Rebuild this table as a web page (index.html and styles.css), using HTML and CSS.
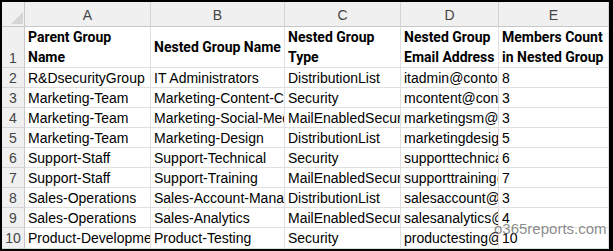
FILE: index.html
```html
<!DOCTYPE html>
<html lang="en">
<head>
<meta charset="utf-8">
<title>Nested Groups Report</title>
<link rel="stylesheet" href="styles.css">
</head>
<body>
<div class="frame">
  <div class="sheet">
    <div class="corner"><svg class="select-all" width="12" height="12" viewBox="0 0 12 12"><polygon points="12,0 12,12 0,12" fill="#d6d6d6"/></svg></div>
    <div class="colhead">A</div>
    <div class="colhead">B</div>
    <div class="colhead">C</div>
    <div class="colhead">D</div>
    <div class="colhead">E</div>

    <div class="rowhead rowhead-bottom">1</div>
    <div class="cell head">Parent Group<br>Name</div>
    <div class="cell head">Nested Group Name</div>
    <div class="cell head">Nested Group<br>Type</div>
    <div class="cell head">Nested Group<br>Email Address</div>
    <div class="cell head">Members Count<br>in Nested Group</div>

    <div class="rowhead">2</div>
    <div class="cell">R&amp;DsecurityGroup</div>
    <div class="cell">IT Administrators</div>
    <div class="cell">DistributionList</div>
    <div class="cell">itadmin@contoso.com</div>
    <div class="cell">8</div>

    <div class="rowhead">3</div>
    <div class="cell">Marketing-Team</div>
    <div class="cell">Marketing-Content-Creators</div>
    <div class="cell">Security</div>
    <div class="cell">mcontent@contoso.com</div>
    <div class="cell">3</div>

    <div class="rowhead">4</div>
    <div class="cell">Marketing-Team</div>
    <div class="cell">Marketing-Social-Media</div>
    <div class="cell">MailEnabledSecurity</div>
    <div class="cell">marketingsm@contoso.com</div>
    <div class="cell">3</div>

    <div class="rowhead">5</div>
    <div class="cell">Marketing-Team</div>
    <div class="cell">Marketing-Design</div>
    <div class="cell">DistributionList</div>
    <div class="cell">marketingdesign@contoso.com</div>
    <div class="cell">5</div>

    <div class="rowhead">6</div>
    <div class="cell">Support-Staff</div>
    <div class="cell">Support-Technical</div>
    <div class="cell">Security</div>
    <div class="cell">supporttechnical@contoso.com</div>
    <div class="cell">6</div>

    <div class="rowhead">7</div>
    <div class="cell">Support-Staff</div>
    <div class="cell">Support-Training</div>
    <div class="cell">MailEnabledSecurity</div>
    <div class="cell">supporttraining@contoso.com</div>
    <div class="cell">7</div>

    <div class="rowhead">8</div>
    <div class="cell">Sales-Operations</div>
    <div class="cell">Sales-Account-Management</div>
    <div class="cell">DistributionList</div>
    <div class="cell">salesaccount@contoso.com</div>
    <div class="cell">3</div>

    <div class="rowhead">9</div>
    <div class="cell">Sales-Operations</div>
    <div class="cell">Sales-Analytics</div>
    <div class="cell">MailEnabledSecurity</div>
    <div class="cell">salesanalytics@contoso.com</div>
    <div class="cell">4</div>

    <div class="rowhead">10</div>
    <div class="cell">Product-Development</div>
    <div class="cell">Product-Testing</div>
    <div class="cell">Security</div>
    <div class="cell">productesting@contoso.com</div>
    <div class="cell">10</div>
  </div>
  <div class="watermark">o365reports.com</div>
</div>
</body>
</html>
```

FILE: styles.css
```css
* {
  box-sizing: border-box;
}

html, body {
  margin: 0;
  padding: 0;
  background: #ffffff;
}

.frame {
  position: relative;
  width: 613px;
  height: 251px;
  border-style: solid;
  border-color: #000000;
  border-width: 2px 4px 2px 2px;
  overflow: hidden;
  font-family: "Liberation Sans", Arial, sans-serif;
  font-size: 14px;
  color: #000000;
}

.sheet {
  display: grid;
  grid-template-columns: 23px 126px 134px 116px 98px 110px;
  grid-template-rows: 25px 41px repeat(8, 20px) 21px;
}

.corner {
  background: #f0f0f0;
  border-right: 1px solid #c8c8c8;
  border-bottom: 1px solid #c8c8c8;
  display: flex;
  justify-content: flex-end;
  align-items: flex-end;
  padding: 0 1px 2px 0;
}

.select-all {
  display: block;
}

.colhead {
  background: #f0f0f0;
  border-right: 1px solid #d4d4d4;
  border-bottom: 1px solid #c8c8c8;
  color: #444444;
  display: flex;
  align-items: center;
  justify-content: center;
  padding-top: 1px;
}

.rowhead {
  background: #f0f0f0;
  border-right: 1px solid #c8c8c8;
  border-bottom: 1px solid #d4d4d4;
  color: #444444;
  display: flex;
  align-items: center;
  justify-content: center;
}

.rowhead-bottom {
  align-items: flex-end;
  padding-bottom: 1px;
}

.cell {
  border-right: 1px solid #e0e0e0;
  border-bottom: 1px solid #e0e0e0;
  padding: 0 2px 0 3px;
  white-space: nowrap;
  overflow: hidden;
  display: flex;
  align-items: center;
}

.cell.head {
  font-family: Roboto, "Liberation Sans", Arial, sans-serif;
  font-weight: bold;
  font-size: 14px;
  line-height: 20px;
}

.watermark {
  position: absolute;
  left: 492px;
  top: 218px;
  font-size: 15px;
  line-height: 17px;
  color: rgba(110, 110, 110, 0.8);
  pointer-events: none;
}
```
